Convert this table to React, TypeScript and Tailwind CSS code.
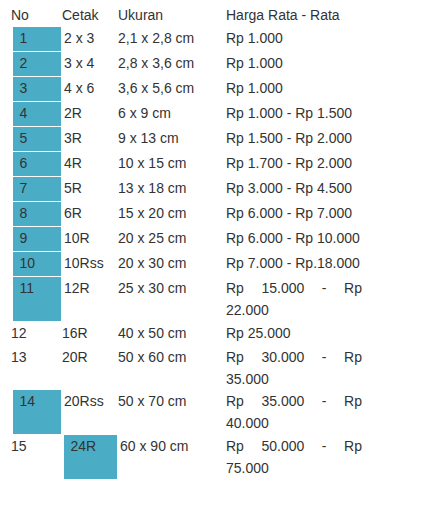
const rows = [
  { no: '1', cetak: '2 x 3', ukuran: '2,1 x 2,8 cm', harga: 'Rp 1.000', hl: 'no' },
  { no: '2', cetak: '3 x 4', ukuran: '2,8 x 3,6 cm', harga: 'Rp 1.000', hl: 'no' },
  { no: '3', cetak: '4 x 6', ukuran: '3,6 x 5,6 cm', harga: 'Rp 1.000', hl: 'no' },
  { no: '4', cetak: '2R', ukuran: '6 x 9 cm', harga: 'Rp 1.000 - Rp 1.500', hl: 'no' },
  { no: '5', cetak: '3R', ukuran: '9 x 13 cm', harga: 'Rp 1.500 - Rp 2.000', hl: 'no' },
  { no: '6', cetak: '4R', ukuran: '10 x 15 cm', harga: 'Rp 1.700 - Rp 2.000', hl: 'no' },
  { no: '7', cetak: '5R', ukuran: '13 x 18 cm', harga: 'Rp 3.000 - Rp 4.500', hl: 'no' },
  { no: '8', cetak: '6R', ukuran: '15 x 20 cm', harga: 'Rp 6.000 - Rp 7.000', hl: 'no' },
  { no: '9', cetak: '10R', ukuran: '20 x 25 cm', harga: 'Rp 6.000 - Rp 10.000', hl: 'no' },
  { no: '10', cetak: '10Rss', ukuran: '20 x 30 cm', harga: 'Rp 7.000 - Rp.18.000', hl: 'no' },
  { no: '11', cetak: '12R', ukuran: '25 x 30 cm', harga: 'Rp 15.000 - Rp 22.000', hl: 'no' },
  { no: '12', cetak: '16R', ukuran: '40 x 50 cm', harga: 'Rp 25.000', hl: '' },
  { no: '13', cetak: '20R', ukuran: '50 x 60 cm', harga: 'Rp 30.000 - Rp 35.000', hl: '' },
  { no: '14', cetak: '20Rss', ukuran: '50 x 70 cm', harga: 'Rp 35.000 - Rp 40.000', hl: 'no' },
  { no: '15', cetak: '24R', ukuran: '60 x 90 cm', harga: 'Rp 50.000 - Rp 75.000', hl: 'cetak' },
]

const cols = 'grid grid-cols-[51px_56px_108px_136px]'

export default function App() {
  return (
    <div className="min-h-screen bg-white pt-[4px] pl-[11px] text-[14px] leading-[22px] text-[#333] font-['Liberation_Sans',Arial,sans-serif]">
      {/* header */}
      <div className={`${cols} h-[23px]`}>
        <div>No</div>
        <div>Cetak</div>
        <div>Ukuran</div>
        <div>Harga Rata - Rata</div>
      </div>

      {rows.map(r => (
        <div
          key={r.no}
          className={`${cols} ${r.hl ? 'min-h-[25px] pb-px' : 'min-h-[24px]'}`}
        >
          {r.hl === 'no' ? (
            <div className="ml-[2px] w-[48px] bg-[#4bacc6] pl-[6.5px]">{r.no}</div>
          ) : (
            <div>{r.no}</div>
          )}

          {r.hl === 'cetak' ? (
            <div className="ml-[2px] w-[53px] bg-[#4bacc6] pl-[6.5px]">{r.cetak}</div>
          ) : (
            <div className={r.hl === 'no' ? 'pl-[2px]' : ''}>{r.cetak}</div>
          )}

          <div className={r.hl === 'cetak' ? 'pl-[2px]' : ''}>{r.ukuran}</div>
          <div className="text-justify">{r.harga}</div>
        </div>
      ))}
    </div>
  )
}
